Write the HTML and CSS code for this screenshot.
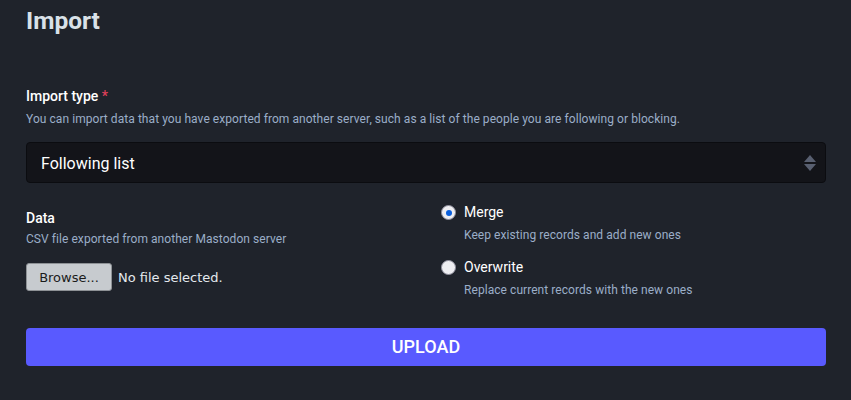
FILE: index.html
```html
<!DOCTYPE html>
<html lang="en">
<head>
<meta charset="utf-8">
<title>Import</title>
<link rel="stylesheet" href="styles.css">
</head>
<body>
<main class="page">
  <h1 class="title">Import</h1>

  <div class="field">
    <div class="label">Import type <abbr class="req" title="required">*</abbr></div>
    <div class="hint">You can import data that you have exported from another server, such as a list of the people you are following or blocking.</div>
    <div class="select">
      <span class="select-value">Following list</span>
      <svg class="select-arrow" width="12" height="17" viewBox="0 0 12 17" aria-hidden="true">
        <polygon points="0,7 6,0 12,7" fill="#585f70"/>
        <polygon points="0,9 12,9 6,16" fill="#585f70"/>
      </svg>
    </div>
  </div>

  <div class="columns">
    <div class="col col-left">
      <div class="label">Data</div>
      <div class="hint hint-data">CSV file exported from another Mastodon server</div>
      <div class="file-row">
        <span class="browse">Browse...</span>
        <span class="file-name">No file selected.</span>
      </div>
    </div>
    <div class="col col-right">
      <div class="radio-item">
        <div class="radio-line">
          <span class="radio checked"><span class="dot"></span></span>
          <span class="radio-label">Merge</span>
        </div>
        <div class="hint radio-hint">Keep existing records and add new ones</div>
      </div>
      <div class="radio-item second">
        <div class="radio-line">
          <span class="radio"></span>
          <span class="radio-label">Overwrite</span>
        </div>
        <div class="hint radio-hint">Replace current records with the new ones</div>
      </div>
    </div>
  </div>

  <div class="upload">UPLOAD</div>
</main>
</body>
</html>
```

FILE: styles.css
```css
html, body {
  margin: 0;
  padding: 0;
  background: #1f232b;
}

body {
  font-family: Roboto, "Liberation Sans", sans-serif;
  color: #ffffff;
}

.page {
  padding: 6px 25px 0 26px;
}

.title {
  margin: 0;
  font-size: 24.5px;
  line-height: 30px;
  font-weight: 700;
  color: #d9e1e8;
}

.field {
  margin-top: 52px;
}

.label {
  font-size: 14px;
  line-height: 17px;
  font-weight: 500;
  color: #ffffff;
}

.req {
  color: #df405a;
  text-decoration: none;
  border: 0;
}

.hint {
  margin-top: 7px;
  font-size: 12px;
  line-height: 15px;
  color: #9baec8;
  letter-spacing: 0.005em;
}

.select {
  margin-top: 15px;
  height: 39px;
  box-sizing: content-box;
  border: 1px solid #0b0c10;
  border-radius: 4px;
  background: #131419;
  display: flex;
  align-items: flex-start;
  justify-content: space-between;
  padding: 0 9px 0 14px;
}

.select-value {
  padding-top: 11px;
  font-size: 16px;
  line-height: 19px;
  color: #ffffff;
}

.select-arrow {
  margin-top: 12px;
}

.columns {
  margin-top: 21px;
  display: grid;
  grid-template-columns: 385px 1fr;
  column-gap: 30px;
}

.col-left {
  padding-top: 6px;
}

.hint-data {
  margin-top: 5px;
}

.file-row {
  margin-top: 16px;
  display: flex;
  align-items: center;
  gap: 6px;
  font-family: "DejaVu Sans", sans-serif;
  font-size: 13px;
}

.browse {
  box-sizing: border-box;
  height: 28px;
  width: 86px;
  display: flex;
  align-items: center;
  justify-content: center;
  background: #c7cbcf;
  border: 1px solid #8d9195;
  border-radius: 3px;
  color: #1b1b1b;
}

.file-name {
  color: #e4e9ee;
  padding-top: 1px;
}

.radio-line {
  display: flex;
  align-items: center;
  height: 17px;
}

.radio {
  box-sizing: border-box;
  width: 15px;
  height: 15px;
  border-radius: 50%;
  background: #eeeef2;
  border: 1px solid #8f8f9d;
  display: flex;
  align-items: center;
  justify-content: center;
  margin-right: 8px;
}

.dot {
  width: 6px;
  height: 6px;
  border-radius: 50%;
  background: #0a5fdc;
}

.radio-label {
  font-size: 14px;
  line-height: 17px;
  color: #ffffff;
}

.radio-hint {
  margin-top: 7px;
  padding-left: 23px;
}

.second {
  margin-top: 16px;
}

.upload {
  margin-top: 30px;
  background: #595aff;
  border-radius: 4px;
  color: #ffffff;
  text-align: center;
  font-size: 18px;
  line-height: 21px;
  font-weight: 500;
  padding: 8px 0 9px;
}
```
